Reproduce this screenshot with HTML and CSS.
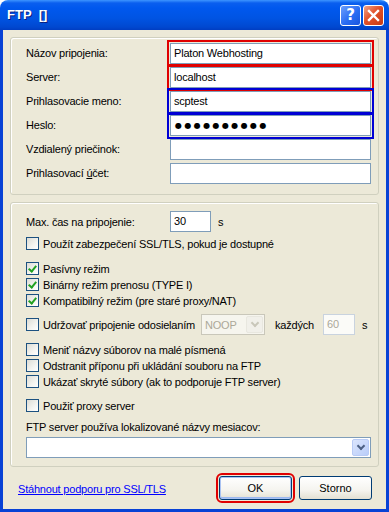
FILE: index.html
```html
<!DOCTYPE html>
<html lang="sk">
<head>
    <meta charset="UTF-8">
    <title>FTP []</title>
    <link rel="stylesheet" href="styles.css">
</head>
<body>
    <div class="window">
        <div class="titlebar">
            <span class="title">FTP&nbsp; []</span>
            <span class="caption-btn help">?</span>
            <span class="caption-btn close">
                <svg width="13" height="13" viewBox="0 0 13 13"><path d="M2 2 L11 11 M11 2 L2 11" stroke="#fff" stroke-width="2.4" stroke-linecap="square"/></svg>
            </span>
        </div>
        <div class="client">
            <div class="group group-login">
                <label>Názov pripojenia:</label>
                <div class="edit mark-red">Platon Webhosting</div>
                <label>Server:</label>
                <div class="edit mark-red">localhost</div>
                <label>Prihlasovacie meno:</label>
                <div class="edit mark-blue">scptest</div>
                <label>Heslo:</label>
                <div class="edit mark-blue password">●●●●●●●●●●</div>
                <label>Vzdialený priečinok:</label>
                <div class="edit"></div>
                <label>Prihlasovací <u>ú</u>čet:</label>
                <div class="edit"></div>
            </div>

            <div class="group group-options">
                <div class="row row-timeout">
                    <span class="timeout-label">Max. čas na pripojenie:</span>
                    <div class="edit small">30</div>
                    <span class="unit">s</span>
                </div>
                <div class="check gap-5"><span class="box"></span>Použít zabezpečení SSL/TLS, pokud je dostupné</div>

                <div class="check gap-12"><span class="box checked"></span>Pasívny režim</div>
                <div class="check gap-3"><span class="box checked"></span>Binárny režim prenosu (TYPE I)</div>
                <div class="check gap-3"><span class="box checked"></span>Kompatibilný režim (pre staré proxy/NAT)</div>

                <div class="row row-keepalive">
                    <div class="check"><span class="box"></span>Udržovať pripojenie odosielaním</div>
                    <div class="combo disabled noop"><span class="value">NOOP</span><span class="arrow"></span></div>
                    <span class="every">každých</span>
                    <div class="edit disabled interval">60</div>
                    <span class="unit">s</span>
                </div>

                <div class="check gap-8"><span class="box"></span>Meniť názvy súborov na malé písmená</div>
                <div class="check gap-3"><span class="box"></span>Odstranit příponu při ukládání souboru na FTP</div>
                <div class="check gap-3"><span class="box"></span>Ukázať skryté súbory (ak to podporuje FTP server)</div>

                <div class="check gap-11"><span class="box"></span>Použiť proxy server</div>

                <div class="months-label">FTP server používa lokalizované názvy mesiacov:</div>
                <div class="combo months"><span class="value"></span><span class="arrow"></span></div>
            </div>

            <div class="footer">
                <a class="ssl-link" href="#">Stáhnout podporu pro SSL/TLS</a>
                <button class="button default mark-red">OK</button>
                <button class="button">Storno</button>
            </div>
        </div>
    </div>
</body>
</html>
```

FILE: styles.css
```css
body {
    margin: 0;
    background: #fff;
    font-family: "Liberation Sans", Arial, sans-serif;
    font-size: 11px;
    letter-spacing: -0.2px;
    color: #000;
}
.window {
    width: 389px;
    height: 512px;
    display: flex;
    flex-direction: column;
}
.titlebar {
    height: 30px;
    flex: none;
    display: flex;
    align-items: center;
    padding: 0 5px 0 7px;
    border-radius: 8px 8px 0 0;
    background: linear-gradient(#3d95ff 0, #0a5fef 3px, #0058ee 8px, #0054e3 18px, #0048d0 27px, #003dc2 30px);
    box-sizing: border-box;
}
.title {
    flex: 1;
    color: #fff;
    font-weight: bold;
    font-size: 13px;
    letter-spacing: 0;
    text-shadow: 1px 1px 0 #0a1f80;
    padding-bottom: 1px;
}
.caption-btn {
    width: 21px;
    height: 21px;
    box-sizing: border-box;
    border: 1px solid #fff;
    border-radius: 3px;
    display: flex;
    align-items: center;
    justify-content: center;
    margin-left: 2px;
}
.help {
    background: linear-gradient(135deg, #6b9ffc, #2a6df3 55%, #1a55dd);
    color: #fff;
    font-weight: bold;
    font-size: 15px;
    font-family: "DejaVu Sans", sans-serif;
}
.close {
    background: linear-gradient(135deg, #f0a58a, #e2512a 45%, #c73a12);
}

.client {
    flex: 1;
    background: #ece9d8;
    border: 3px solid #0842d5;
    border-top: none;
    padding: 7px 7px 0;
    display: flex;
    flex-direction: column;
}
.group {
    border: 1px solid #d0d0bf;
    border-radius: 3px;
    box-shadow: inset 1px 1px 0 #fff;
}
.group-login {
    display: grid;
    grid-template-columns: 144px 201px;
    row-gap: 3px;
    align-items: center;
    padding: 5px 0 10px 15px;
}
label {
    line-height: 21px;
}
.edit {
    height: 21px;
    box-sizing: border-box;
    border: 1px solid #7f9db9;
    background: #fff;
    padding: 0 3px;
    line-height: 19px;
    white-space: nowrap;
    overflow: hidden;
}
.password {
    font-family: "DejaVu Sans", sans-serif;
    font-size: 8px;
    letter-spacing: 2.4px;
    padding-left: 4px;
}
.mark-red {
    outline: 2px solid #e00000;
    outline-offset: 1px;
}
.mark-blue {
    outline: 2px solid #0000d4;
    outline-offset: 1px;
}

.group-options {
    margin-top: 7px;
    padding: 8px 7px 8px 15px;
    display: flex;
    flex-direction: column;
}
.row {
    display: flex;
    align-items: center;
    height: 21px;
}
.timeout-label {
    width: 144px;
}
.edit.small {
    width: 41px;
}
.unit {
    margin-left: 7px;
}
.check {
    display: flex;
    align-items: center;
    height: 13px;
    white-space: nowrap;
}
.box {
    width: 13px;
    height: 13px;
    box-sizing: border-box;
    border: 1px solid #1c5180;
    background: linear-gradient(135deg, #dcdcd5, #f4f4f0 60%, #fff);
    margin-right: 4px;
    flex: none;
    position: relative;
}
.box.checked::after {
    content: "";
    position: absolute;
    left: 3px;
    top: 1px;
    width: 3px;
    height: 6px;
    border: solid #21a121;
    border-width: 0 2px 2px 0;
    transform: rotate(40deg);
}
.gap-3 { margin-top: 3px; }
.gap-5 { margin-top: 5px; }
.gap-8 { margin-top: 8px; }
.gap-11 { margin-top: 11px; }
.gap-12 { margin-top: 12px; }

.row-keepalive {
    margin-top: 7px;
}
.row-keepalive .check {
    width: 175px;
}
.combo {
    height: 21px;
    box-sizing: border-box;
    border: 1px solid #7f9db9;
    background: #fff;
    display: flex;
    align-items: center;
    padding: 0 1px 0 3px;
}
.combo .value {
    flex: 1;
}
.combo .arrow {
    width: 17px;
    height: 17px;
    box-sizing: border-box;
    border: 1px solid #b8cbf6;
    border-radius: 2px;
    background: linear-gradient(135deg, #dbe5fd, #b9cdf9);
    position: relative;
}
.combo .arrow::after {
    content: "";
    position: absolute;
    left: 5px;
    top: 3px;
    width: 4px;
    height: 4px;
    border: solid #4d6185;
    border-width: 0 2px 2px 0;
    transform: rotate(45deg);
}
.combo.disabled {
    border-color: #c9c7ba;
    background: #f6f5ee;
    color: #aca899;
}
.combo.disabled .arrow {
    border-color: #e8e7df;
    background: #f1f0ea;
}
.combo.disabled .arrow::after {
    border-color: #c9c7ba;
}
.noop {
    width: 64px;
}
.every {
    margin-left: 10px;
    width: 48px;
}
.edit.disabled {
    border-color: #c9d3df;
    background: #fbfbf8;
    color: #aca899;
}
.interval {
    width: 32px;
}
.months-label {
    margin-top: 9px;
    line-height: 13px;
}
.months {
    margin-top: 3px;
}

.footer {
    display: flex;
    align-items: center;
    padding: 9px 7px 0 8px;
}
.ssl-link {
    flex: 1;
    color: #0000ff;
    text-decoration: underline;
    margin-top: 2px;
}
.button {
    width: 73px;
    height: 24px;
    margin-left: 7px;
    font-family: "Liberation Sans", Arial, sans-serif;
    font-size: 11px;
    color: #000;
    border: 1px solid #003c74;
    border-radius: 3px;
    background: linear-gradient(#fff 0, #f5f4ef 60%, #e3e0d2 100%);
    padding: 0;
}
.button.default {
    box-shadow: inset 0 0 0 1px #a9c2f2, inset 0 -1px 0 1px #9cb8f0;
}
```
